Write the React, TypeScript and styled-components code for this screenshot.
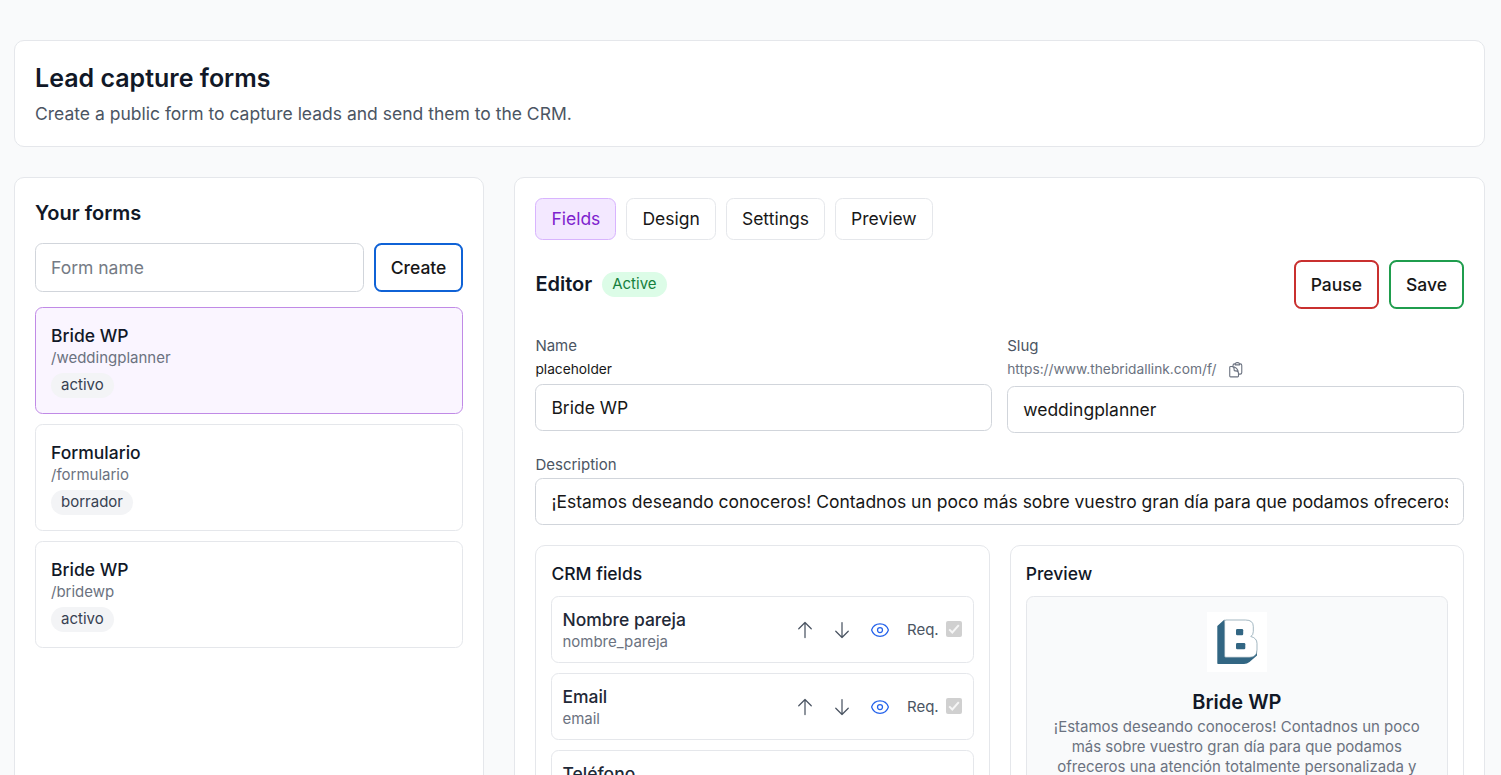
import React from "react";
import styled, { createGlobalStyle, css } from "styled-components";
import {
  HiOutlineArrowDown,
  HiOutlineArrowUp,
  HiOutlineClipboardDocument,
  HiOutlineEye,
} from "react-icons/hi2";

const GlobalStyle = createGlobalStyle`
  *, *::before, *::after { box-sizing: border-box; }
  html, body { height: 100%; }
  body {
    margin: 0;
    overflow: hidden;
    background: #f9fafb;
    color: #171717;
    font-family: Inter, "Liberation Sans", sans-serif;
    font-size: 17.5px;
    line-height: 25px;
  }
  #root { height: 100%; overflow: hidden; }
  h1, h2, h3, p { margin: 0; }
  button, input { font: inherit; color: inherit; }
`;

const Page = styled.main`
  display: flex;
  flex-direction: column;
  gap: 30px;
  padding: 40px 16px 30px 14px;
`;

const Card = styled.section`
  background: #fff;
  border: 1px solid #e5e7eb;
  border-radius: 10px;
  padding: 20px;
`;

const Title = styled.h1`
  font-size: 25px;
  line-height: 35px;
  font-weight: 600;
  color: #111827;
`;

const Subtitle = styled.p`
  margin-top: 5px;
  color: #4b5563;
`;

const Columns = styled.div`
  display: grid;
  grid-template-columns: 470.4px 1fr;
  gap: 30px;
`;

const Heading = styled.h2`
  font-size: 20px;
  line-height: 30px;
  font-weight: 600;
  color: #111827;
`;

const EditorHeading = styled(Heading)`
  line-height: 28px;
  padding-bottom: 2px;
`;

const inputBase = css`
  width: 100%;
  min-width: 0;
  padding: 0 15px;
  border: 1px solid #d1d5db;
  border-radius: 7.5px;
  background: #fff;
  outline: none;
`;

const TextInput = styled.input`
  ${inputBase}
  height: 47px;
  display: block;
`;

const NewFormInput = styled.input`
  ${inputBase}
  flex: 1;
  height: 49px;
  &::placeholder {
    color: #757b85;
    opacity: 1;
  }
`;

const CreateRow = styled.div`
  display: flex;
  gap: 10px;
  margin: 15px 0;
`;

const ActionButton = styled.button<{ $color: string }>`
  height: 49px;
  padding: 0 15px;
  border: 2px solid ${(p) => p.$color};
  border-radius: 7.5px;
  background: #fff;
  font-weight: 500;
`;

const FormList = styled.div`
  display: flex;
  flex-direction: column;
  gap: 10px;
`;

const FormItem = styled.article<{ $selected?: boolean }>`
  display: flex;
  flex-direction: column;
  align-items: flex-start;
  padding: 15px;
  border: 1px solid ${(p) => (p.$selected ? "#c08ae6" : "#e5e7eb")};
  border-radius: 7.5px;
  background: ${(p) => (p.$selected ? "#faf5ff" : "#fff")};
`;

const ItemName = styled.div`
  font-weight: 500;
  color: #111827;
`;

const ItemKey = styled.div`
  font-size: 15px;
  line-height: 20px;
  color: #6b7280;
`;

const Badge = styled.span<{ $tone?: "green" }>`
  padding: 2px 10px 3px;
  border-radius: 999px;
  font-size: 15px;
  line-height: 20px;
  background: ${(p) => (p.$tone === "green" ? "#dcfce7" : "#f3f4f6")};
  color: ${(p) => (p.$tone === "green" ? "#15803d" : "#374151")};
`;

const ItemBadge = styled(Badge)`
  margin-top: 5px;
`;

const Tabs = styled.nav`
  display: flex;
  gap: 10.1px;
`;

const Tab = styled.button<{ $active?: boolean }>`
  padding: 7px 15px 8px;
  border: 1px solid ${(p) => (p.$active ? "#d8b4fe" : "#e5e7eb")};
  border-radius: 7.5px;
  background: ${(p) => (p.$active ? "#f3e8ff" : "#fff")};
  color: ${(p) => (p.$active ? "#7e22ce" : "#171717")};
`;

const EditorBar = styled.div`
  display: flex;
  align-items: center;
  justify-content: space-between;
  margin: 20px 0 25px;
`;

const Cluster = styled.div`
  display: flex;
  align-items: center;
  gap: 10px;
`;

const FieldPair = styled.div`
  display: grid;
  grid-template-columns: 1fr 1fr;
  align-items: start;
  gap: 15px;
  margin-bottom: 20px;
`;

const Label = styled.div`
  font-size: 15px;
  line-height: 23px;
  padding-bottom: 2px;
  color: #4b5563;
`;

const Hint = styled.div<{ $muted?: boolean }>`
  display: flex;
  align-items: center;
  gap: 10px;
  height: ${(p) => (p.$muted ? 22 : 20)}px;
  margin-bottom: 5px;
  font-size: 13.75px;
  line-height: 20px;
  color: ${(p) => (p.$muted ? "#6b7280" : "#171717")};
`;

const HintText = styled.span`
  padding-bottom: 2px;
`;

const Panels = styled.div`
  display: grid;
  grid-template-columns: 1fr 1fr;
  gap: 20px;
  margin-top: 20px;
`;

const Panel = styled.section`
  padding: 15px;
  border: 1px solid #e5e7eb;
  border-radius: 10px;
`;

const PanelTitle = styled.h3`
  margin-bottom: 10px;
  font-size: 17.5px;
  line-height: 25px;
  font-weight: 500;
  color: #111827;
`;

const FieldRow = styled.div`
  display: flex;
  align-items: center;
  justify-content: space-between;
  padding: 10px;
  border: 1px solid #e5e7eb;
  border-radius: 7.5px;
  & + & {
    margin-top: 10px;
  }
`;

const FieldName = styled(ItemName)`
  color: #1f2937;
`;

const Controls = styled.div`
  display: flex;
  align-items: center;
  gap: 7.5px;
`;

const IconButton = styled.button<{ $blue?: boolean }>`
  display: flex;
  padding: 5px;
  border: 0;
  background: none;
  color: ${(p) => (p.$blue ? "#2563eb" : "#4b5563")};
`;

const Required = styled.label`
  display: flex;
  align-items: center;
  gap: 7px;
  margin-left: 5px;
  font-size: 15px;
  line-height: 20px;
  color: #4b5563;
`;

const CheckBox = styled.span`
  display: flex;
  width: 16px;
  height: 16px;
  margin: 0 1px 2px 0;
  border-radius: 2px;
  background: #d0d0d0;
`;

const PreviewBox = styled.div`
  display: flex;
  flex-direction: column;
  align-items: center;
  padding: 15px;
  border: 1px solid #e5e7eb;
  border-radius: 7.5px;
  background: #f9fafb;
  text-align: center;
`;

const Logo = styled.svg`
  display: block;
  width: 60px;
  height: 60px;
  margin-bottom: 15px;
  background: #fff;
`;

const PreviewText = styled.p`
  font-size: 15px;
  line-height: 20px;
  color: #6b7280;
`;

const description =
  "¡Estamos deseando conoceros! Contadnos un poco más sobre vuestro gran día para que podamos ofreceros una atención totalmente personalizada y";

const forms = [
  { name: "Bride WP", slug: "/weddingplanner", status: "activo" },
  { name: "Formulario", slug: "/formulario", status: "borrador" },
  { name: "Bride WP", slug: "/bridewp", status: "activo" },
];

const fields = [
  { name: "Nombre pareja", key: "nombre_pareja" },
  { name: "Email", key: "email" },
  { name: "Teléfono", key: "telefono" },
];

const tabs = ["Fields", "Design", "Settings", "Preview"];

function BrandLogo() {
  return (
    <Logo viewBox="0 0 60 60" aria-label="Bride WP">
      <path
        d="M17.5 7.5 10.3 14V51.3Q10.3 52 11 52H37Q40 52 42.5 50L50 43.5V36L18 12Z"
        fill="#326683"
      />
      <path
        d="M19 8H38.5Q46.3 8 46.3 14.5V19.5Q46.3 23 43.8 24.5Q50 26 50 31.5V38Q50 45.3 42.5 45.3H18.8Q17.6 45.3 17.6 44V9.4Q17.6 8 19 8Z"
        fill="#fff"
        stroke="#7d9aa8"
        strokeWidth=".7"
      />
      <rect x="29" y="17" width="7.2" height="6.2" rx="1.2" fill="#326683" />
      <rect x="29" y="31" width="9.3" height="6.2" rx="1.2" fill="#326683" />
    </Logo>
  );
}

export default function App() {
  return (
    <>
      <GlobalStyle />
      <Page>
        <Card>
          <Title>Lead capture forms</Title>
          <Subtitle>Create a public form to capture leads and send them to the CRM.</Subtitle>
        </Card>
        <Columns>
          <Card>
            <Heading>Your forms</Heading>
            <CreateRow>
              <NewFormInput placeholder="Form name" />
              <ActionButton $color="#0f62d6">Create</ActionButton>
            </CreateRow>
            <FormList>
              {forms.map((f, i) => (
                <FormItem key={f.slug} $selected={i === 0}>
                  <ItemName>{f.name}</ItemName>
                  <ItemKey>{f.slug}</ItemKey>
                  <ItemBadge>{f.status}</ItemBadge>
                </FormItem>
              ))}
            </FormList>
          </Card>
          <Card>
            <Tabs>
              {tabs.map((t, i) => (
                <Tab key={t} $active={i === 0}>
                  {t}
                </Tab>
              ))}
            </Tabs>
            <EditorBar>
              <Cluster>
                <EditorHeading>Editor</EditorHeading>
                <Badge $tone="green">Active</Badge>
              </Cluster>
              <Cluster>
                <ActionButton $color="#c9302f">Pause</ActionButton>
                <ActionButton $color="#1f9d4d">Save</ActionButton>
              </Cluster>
            </EditorBar>
            <FieldPair>
              <div>
                <Label>Name</Label>
                <Hint>placeholder</Hint>
                <TextInput defaultValue="Bride WP" />
              </div>
              <div>
                <Label>Slug</Label>
                <Hint $muted>
                  <HintText>https://www.thebridallink.com/f/</HintText>
                  <HiOutlineClipboardDocument size={17.5} />
                </Hint>
                <TextInput defaultValue="weddingplanner" />
              </div>
            </FieldPair>
            <Label>Description</Label>
            <TextInput defaultValue={description} />
            <Panels>
              <Panel>
                <PanelTitle>CRM fields</PanelTitle>
                {fields.map((f) => (
                  <FieldRow key={f.key}>
                    <div>
                      <FieldName>{f.name}</FieldName>
                      <ItemKey>{f.key}</ItemKey>
                    </div>
                    <Controls>
                      <IconButton aria-label="Move up">
                        <HiOutlineArrowUp size={20} />
                      </IconButton>
                      <IconButton aria-label="Move down">
                        <HiOutlineArrowDown size={20} />
                      </IconButton>
                      <IconButton $blue aria-label="Visible">
                        <HiOutlineEye size={20} />
                      </IconButton>
                      <Required>
                        Req.
                        <CheckBox>
                          <svg width="16" height="16" viewBox="0 0 16 16" fill="none">
                            <path d="M3.2 8.4 6.3 11.5 12.8 4.2" stroke="#f6f6f6" strokeWidth="2" />
                          </svg>
                        </CheckBox>
                      </Required>
                    </Controls>
                  </FieldRow>
                ))}
              </Panel>
              <Panel>
                <PanelTitle>Preview</PanelTitle>
                <PreviewBox>
                  <BrandLogo />
                  <Heading>Bride WP</Heading>
                  <PreviewText>{description}</PreviewText>
                </PreviewBox>
              </Panel>
            </Panels>
          </Card>
        </Columns>
      </Page>
    </>
  );
}
